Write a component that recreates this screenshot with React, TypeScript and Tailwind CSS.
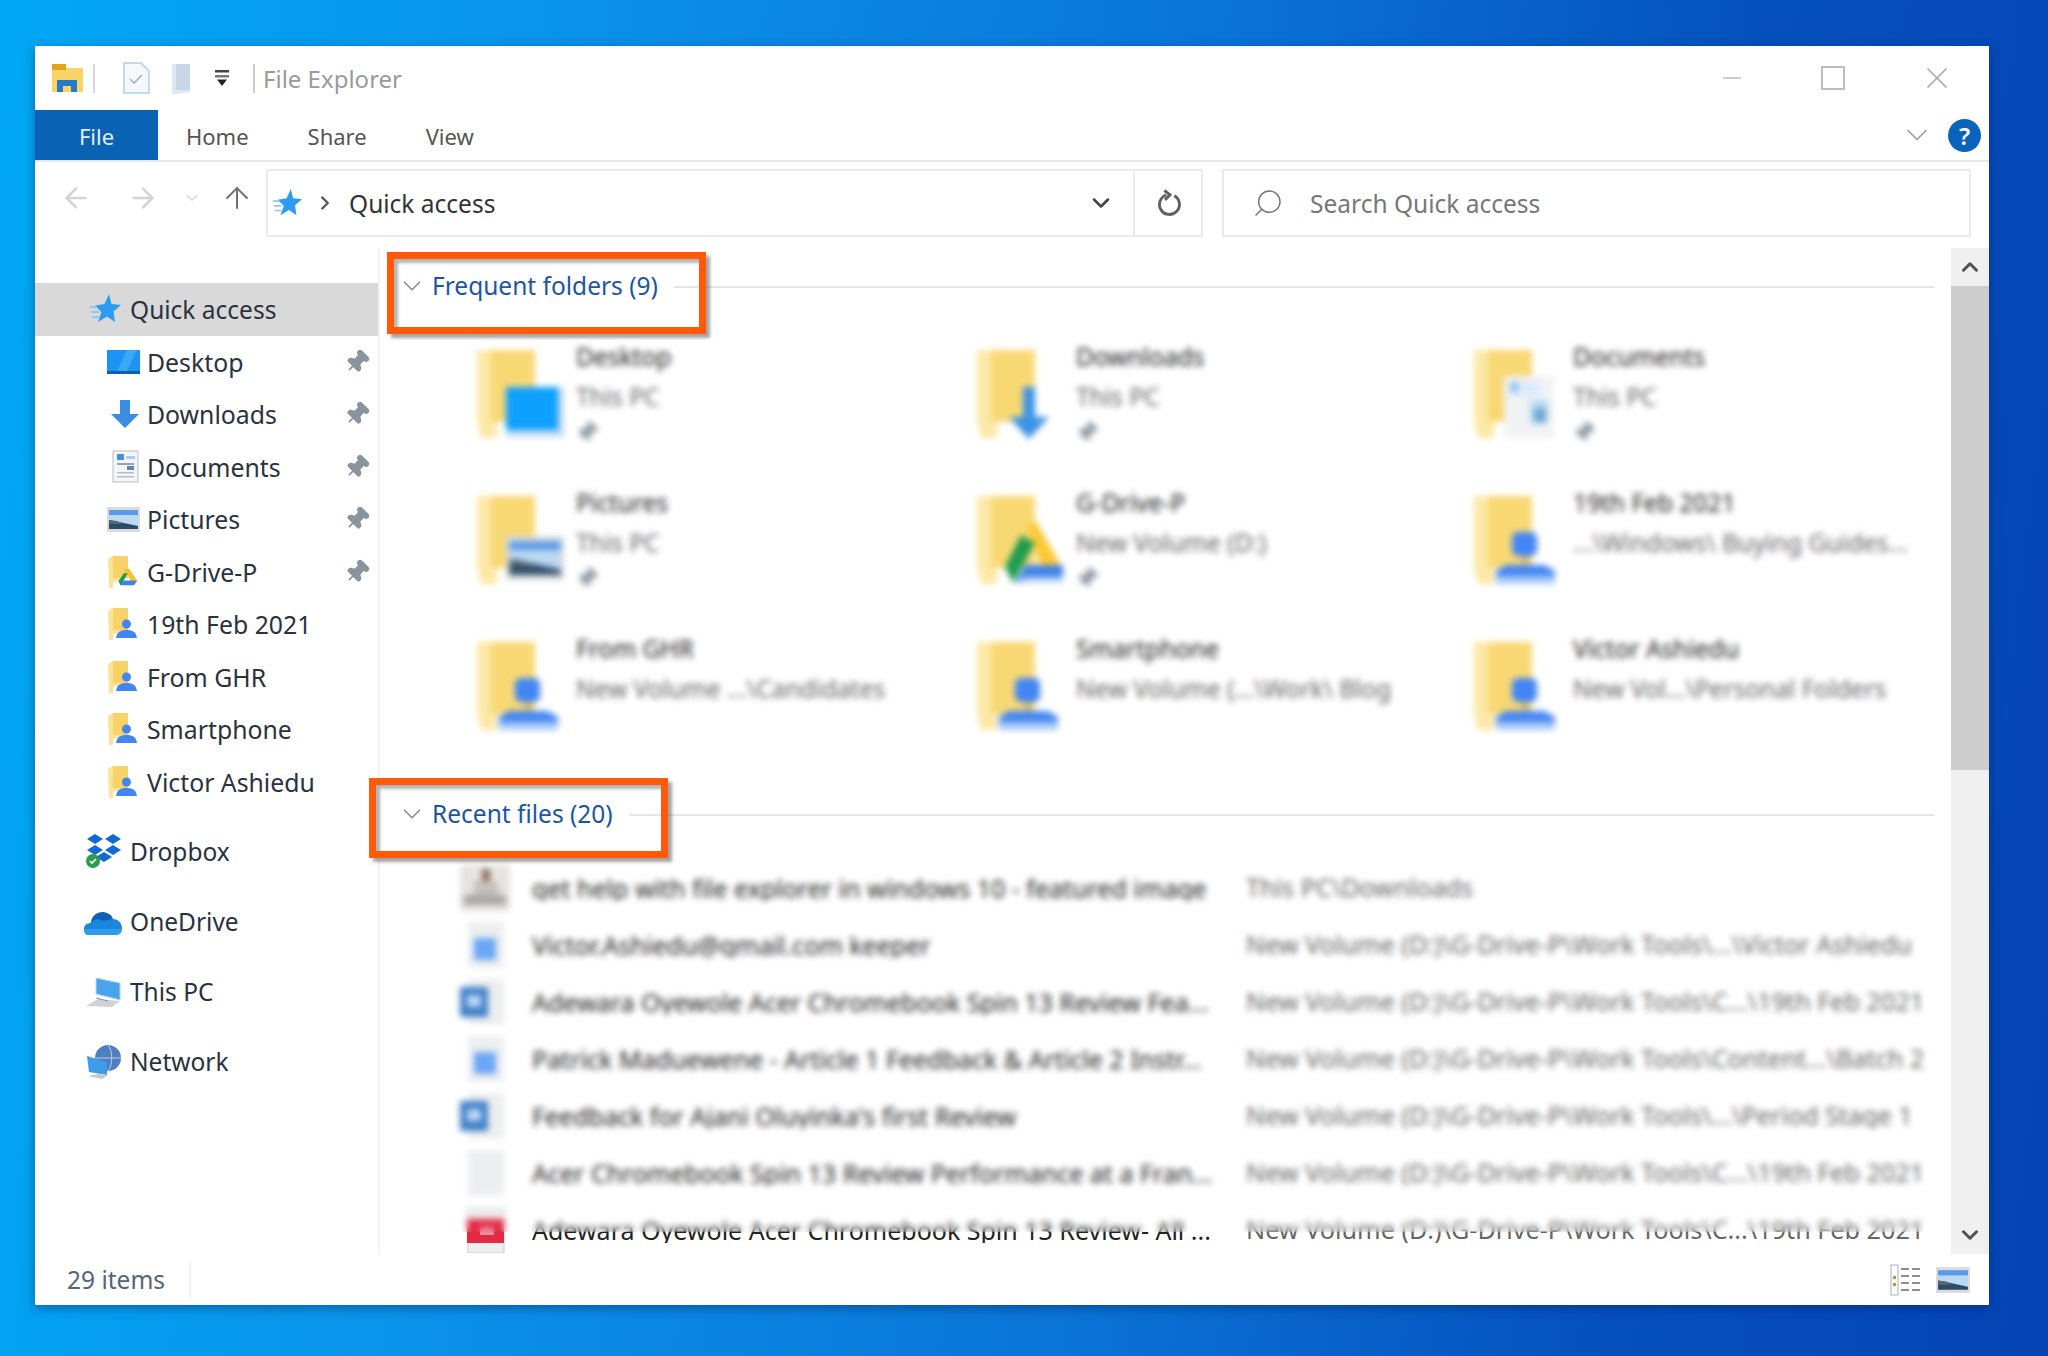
import React from "react";
import { ArrowLeft, ArrowRight, ArrowUp, ChevronDown, ChevronUp, ChevronRight, Search, Pin, X, Minus } from "lucide-react";

const Star = ({ s = 32 }: { s?: number }) => (
  <svg width={s} height={s} viewBox="0 0 32 32" className="shrink-0">
    <polygon points="19,1 21.5,11 31,12 23.5,18.5 25,29 17,23.5 8,29 11.5,19 5,12.5 14.5,11" fill="#2c9cf2" />
    <path d="M0 14h7M1 19h8M2 24h7" stroke="#8cc8f6" strokeWidth="1.8" />
  </svg>
);

const DesktopI = () => (
  <svg width="33" height="24" viewBox="0 0 33 24"><rect width="33" height="24" fill="#1d93f3" /><rect y="21" width="33" height="3" fill="#0f5fb0" /><path d="M20 0L10 21h10L30 0z" fill="#3aa7f7" /></svg>
);
const DownloadI = () => (
  <svg width="30" height="30" viewBox="0 0 30 30"><path d="M10 1h10v14h9L15 29 1 15h9z" fill="#3c8ddf" /></svg>
);
const DocI = () => (
  <svg width="28" height="33" viewBox="0 0 28 33"><rect x="1" y="1" width="25" height="31" fill="#f4f5f7" stroke="#b9bdc2" /><rect x="5" y="4" width="7" height="6" fill="#4a90d9" /><rect x="14" y="6" width="9" height="3" fill="#a9cdf0" /><rect x="5" y="13" width="17" height="2" fill="#8fa3b8" /><rect x="15" y="16" width="7" height="4" fill="#5a88b8" /><rect x="5" y="22" width="17" height="1.5" fill="#b9bdc2" /><rect x="5" y="26" width="17" height="1.5" fill="#b9bdc2" /></svg>
);
const PicI = ({ w = 33, h = 25 }: { w?: number; h?: number }) => (
  <svg width={w} height={h} viewBox="0 0 33 25"><rect width="33" height="25" fill="#d9dbde" /><rect x="2" y="3" width="29" height="19" fill="#bcd9f3" /><rect x="2" y="3" width="29" height="5" fill="#5a9ae6" /><path d="M2 13l10 2 19 4v3H2z" fill="#2d4a68" /><path d="M2 13l8 1 6 3H2z" fill="#55686f" /></svg>
);

const PersonS = () => (
  <svg width="21" height="20" viewBox="0 0 21 20" className="absolute left-[8px] top-[11px]"><circle cx="10.5" cy="5" r="4.5" fill="#4285f4" /><path d="M0 19c1-6 4-8 10.5-8S20 13 21 19z" fill="#4285f4" /></svg>
);
const GDriveS = () => (
  <svg width="22" height="21" viewBox="0 0 28 24" className="absolute left-[8px] top-[10px]"><path d="M10 2h7l10 16h-8z" fill="#fbc02d" /><path d="M10 8L3 18l3 5 9-15z" fill="#1e9c4d" /><path d="M9 17h18l-4 6H5z" fill="#3f80ea" /></svg>
);
const FolderS = ({ kind }: { kind: "person" | "drive" }) => (
  <span className="relative mr-[2px] block h-[32px] w-[30px]">
    <svg width="20" height="32" viewBox="0 0 20 32" className="absolute left-0 top-0"><path d="M0 3l5-3h15v22L5 26v6H1z" fill="#fbe39a" /><path d="M5 0h15v22H5z" fill="#f6d267" /></svg>
    {kind === "person" ? <PersonS /> : <GDriveS />}
  </span>
);

const Dropbox = () => (
  <svg width="36" height="36" viewBox="0 0 36 36"><g fill="#1269d3"><path d="M9 0l8 5-8 5-8-5z" /><path d="M27 0l8 5-8 5-8-5z" /><path d="M9 11l8 5-8 5-8-5z" /><path d="M27 11l8 5-8 5-8-5z" /><path d="M18 18l8 5-8 5-8-5z" /></g><circle cx="7" cy="27" r="7" fill="#2a9d50" /><path d="M4 27l2 2 4-4" stroke="#fff" strokeWidth="1.6" fill="none" /></svg>
);
const OneDrive = () => (
  <svg width="38" height="26" viewBox="0 0 38 26"><path d="M7 14c0-8 9-13 16-10 3 1 5 3 6 6l-12 8z" fill="#0f5fb5" /><path d="M29 10c5 0 9 4 9 9 0 4-3 7-7 7H5c-3 0-5-2-5-6 0-4 3-6 7-6 3-4 8-5 12-2z" fill="#1c86dc" /><path d="M0 20h38c0 4-3 6-7 6H5c-3 0-5-2-5-6z" fill="#2f9cec" /></svg>
);
const ThisPc = () => (
  <svg width="38" height="32" viewBox="0 0 38 32"><path d="M12 2l24 5v17l-24-6z" fill="#4aa3ec" stroke="#b8d8f2" /><path d="M2 30l12-7 22 2-8 6z" fill="#cfd3d8" /><path d="M12 22l12 3" stroke="#8a949e" /></svg>
);
const Network = () => (
  <svg width="36" height="34" viewBox="0 0 36 34"><circle cx="22" cy="13" r="13" fill="#4f7fc0" /><path d="M22 0c5 6 5 20 0 26M9 13h26" stroke="#b8cfe8" fill="none" /><path d="M1 11l20 6v13L3 27z" fill="#3d9be8" /><path d="M2 31l10-2 10 1-6 4z" fill="#c4c8cd" /></svg>
);
const Refresh = () => (
  <svg width="30" height="30" viewBox="0 0 24 24" fill="none" stroke="#606060" strokeWidth="2.3"><path d="M15.5 6.2A8 8 0 1 1 9 5.6" /><path d="M7.5 2L12 5.5 8 9.5" /></svg>
);

const PinI = () => <Pin size={26} className="rotate-45 text-[#8a949e]" fill="#8a949e" strokeWidth={1.5} />;

const BigFolder = ({ children }: { children: React.ReactNode }) => (
  <span className="relative block h-[88px] w-[99px] shrink-0">
    <svg width="58" height="88" viewBox="0 0 58 88" className="absolute left-0 top-0"><path d="M0 0h58v62H20v26H4L0 70z" fill="#fce8a6" /><path d="M14 0h44v72H14z" fill="#f8d873" /></svg>
    {children}
  </span>
);

const OvDesktop = () => <span className="absolute left-[29px] top-[37px] block h-[50px] w-[58px] border-b-[7px] border-r-[6px] border-[#c2dcf5] bg-[#0ea0ff]" />;
const OvDownload = () => <svg width="44" height="52" viewBox="0 0 44 52" className="absolute left-[30px] top-[37px]"><path d="M16 0h12v30h14L22 52 2 30h14z" fill="#3b92e4" /></svg>;
const OvDoc = () => <svg width="54" height="62" viewBox="0 0 54 62" className="absolute left-[30px] top-[26px]"><rect width="50" height="62" fill="#f1f2f4" /><rect x="6" y="6" width="30" height="14" fill="#dbeafa" /><rect x="6" y="6" width="8" height="10" fill="#8fc0f0" /><rect x="26" y="24" width="18" height="24" fill="#b7dcf6" /><rect x="30" y="32" width="12" height="14" fill="#6fa9cf" /></svg>;
const OvPic = () => <span className="absolute left-[29px] top-[37px]"><PicI w={58} h={50} /></span>;
const OvDrive = () => <svg width="58" height="60" viewBox="0 0 58 60" className="absolute left-[28px] top-[27px]"><path d="M22 0h10l26 46H36z" fill="#fcc934" /><path d="M16 12L0 44l8 16 22-40z" fill="#1e9c4d" /><path d="M20 42h38v18H10z" fill="#3f80ea" /><path d="M20 54h38v6H10z" fill="#bcd9f8" /></svg>;
const OvPerson = () => <svg width="60" height="52" viewBox="0 0 60 52" className="absolute left-[22px] top-[36px]"><rect x="16" y="0" width="25" height="24" fill="#4285f4" rx="6" /><rect x="26" y="24" width="6" height="8" fill="#c7b27a" /><path d="M0 52V39l10-6h38l11 6v13z" fill="#4285f4" /><rect x="0" y="44" width="59" height="8" fill="#a9c9f8" /></svg>;

const folders: [string, string, boolean, React.ReactNode][] = [
  ["Desktop", "This PC", true, <OvDesktop />],
  ["Downloads", "This PC", true, <OvDownload />],
  ["Documents", "This PC", true, <OvDoc />],
  ["Pictures", "This PC", true, <OvPic />],
  ["G-Drive-P", "New Volume (D:)", true, <OvDrive />],
  ["19th Feb 2021", "...\\Windows\\ Buying Guides...", false, <OvPerson />],
  ["From GHR", "New Volume ...\\Candidates", false, <OvPerson />],
  ["Smartphone", "New Volume (...\\Work\\ Blog", false, <OvPerson />],
  ["Victor Ashiedu", "New Vol...\\Personal Folders", false, <OvPerson />],
];

const PageI = ({ color, badge }: { color?: string; badge?: string }) => (
  <svg width="50" height="46" viewBox="0 0 50 46">
    <rect x="8" y="0" width="36" height="46" fill="#eceef0" />
    {color && <rect x="14" y="16" width="22" height="22" fill={color} />}
    {badge && <rect x="0" y="8" width="28" height="30" fill={badge} />}
    {badge && <rect x="7" y="16" width="14" height="12" fill="#bcd6f2" />}
  </svg>
);
const PdfI = () => (
  <svg width="50" height="46" viewBox="0 0 50 46"><rect x="8" y="0" width="36" height="46" fill="#eeeeee" stroke="#c9c9c9" /><rect x="7" y="12" width="37" height="24" fill="#e32a45" /><rect x="20" y="20" width="14" height="8" fill="#f08a9a" /></svg>
);
const ThumbI = () => (
  <svg width="50" height="46" viewBox="0 0 50 46"><rect width="50" height="46" fill="#e6e4e2" /><path d="M22 4h8v18h-8z" fill="#8a6a55" /><path d="M4 30h42v10H4z" fill="#a9a6a4" /><path d="M14 16h24v14H14z" fill="#c7c0ba" /></svg>
);

const files: [string, string, React.ReactNode][] = [
  ["get help with file explorer in windows 10 - featured image", "This PC\\Downloads", <ThumbI />],
  ["Victor.Ashiedu@gmail.com keeper", "New Volume (D:)\\G-Drive-P\\Work Tools\\...\\Victor Ashiedu", <PageI color="#6ba6f5" />],
  ["Adewara Oyewole Acer Chromebook Spin 13 Review Fea...", "New Volume (D:)\\G-Drive-P\\Work Tools\\C...\\19th Feb 2021", <PageI badge="#3f7fc8" />],
  ["Patrick Maduewene - Article 1 Feedback & Article 2 Instr...", "New Volume (D:)\\G-Drive-P\\Work Tools\\Content...\\Batch 2", <PageI color="#6ba6f5" />],
  ["Feedback for Ajani Oluyinka's first Review", "New Volume (D:)\\G-Drive-P\\Work Tools\\...\\Period Stage 1", <PageI badge="#3f7fc8" />],
  ["Acer Chromebook Spin 13 Review Performance at a Fran...", "New Volume (D:)\\G-Drive-P\\Work Tools\\C...\\19th Feb 2021", <PageI />],
  ["Adewara Oyewole Acer Chromebook Spin 13 Review- All ...", "New Volume (D:)\\G-Drive-P\\Work Tools\\C...\\19th Feb 2021", <PdfI />],
];

const NavRow = ({ icon, label, pin }: { icon: React.ReactNode; label: string; pin?: boolean }) => (
  <div className="flex h-[52.5px] items-center pr-[8px]">
    <span className="flex w-[112px] shrink-0 items-center justify-end pr-[7px]">{icon}</span>
    <span className="flex-1 pt-[1px] text-[24.8px] text-[#2a3240]">{label}</span>
    {pin && <PinI />}
  </div>
);
const TopRow = ({ icon, label, active }: { icon: React.ReactNode; label: string; active?: boolean }) => (
  <div className={`flex h-[52.5px] items-center ${active ? "bg-[#d9d9d9]" : ""}`}>
    <span className="flex w-[95px] shrink-0 items-center justify-end pr-[8px]">{icon}</span>
    <span className="pt-[1px] text-[#2a3240]">{label}</span>
  </div>
);

const SectionHead = ({ label }: { label: string }) => (
  <div className="flex h-[40px] items-center pl-[17px]">
    <ChevronDown size={30} strokeWidth={1.1} className="text-[#7c8a9a]" />
    <span className="ml-[5px] whitespace-nowrap pt-[1px] text-[#1d55a5]">{label}</span>
    <span className="ml-[16px] mt-[2px] h-[2px] flex-1 bg-[#e6e6e6]" />
  </div>
);

export default function App() {
  return (
    <div className="h-[1356px] w-[2048px] overflow-hidden bg-[linear-gradient(97deg,#00a8f5_0%,#0a93ea_25%,#0a74d8_55%,#0550bd_80%,#0444b4_100%)] pl-[35px] pt-[46px] blur-[0.6px] [font-family:'Noto_Sans',sans-serif] text-[24.5px] leading-none">
      <div className="flex h-[1259px] w-[1954px] flex-col bg-white shadow-[0_3px_10px_rgba(0,30,80,0.45)]">
        {/* Title bar */}
        <div className="flex h-[64px] shrink-0 items-center pl-[16px]">
          <svg width="33" height="28" viewBox="0 0 33 28"><path d="M1 0h14v4h17v24H1z" fill="#fbd468" /><rect x="1" y="0" width="14" height="6" fill="#e3a21a" /><path d="M6 28V16h20v12h-6v-6h-8v6z" fill="#2a78c8" /></svg>
          <span className="ml-[9px] h-[29px] w-[2px] bg-[#d8d8d8]" />
          <svg width="27" height="32" viewBox="0 0 27 32" className="ml-[28px]"><path d="M1 1h17l8 8v22H1z" fill="#f5f9fd" stroke="#b5cde6" strokeWidth="1.5" /><path d="M7 17l4 4 8-8" stroke="#a8b4be" strokeWidth="1.6" fill="none" /></svg>
          <svg width="22" height="31" viewBox="0 0 22 31" className="ml-[21px]"><path d="M1 1h18v28l-13 2H1z" fill="#dfe8f2" /><path d="M5 1h14v26H5z" fill="#c8d6e6" /></svg>
          <svg width="14" height="16" viewBox="0 0 14 16" className="ml-[22px]"><rect width="14" height="2.5" fill="#444" /><rect y="5" width="14" height="2.5" fill="#777" /><path d="M2 9.5h10L7 16z" fill="#222" /></svg>
          <span className="ml-[24px] h-[29px] w-[2px] bg-[#cfcfcf]" />
          <span className="ml-[8px] pt-[2px] text-[24px] text-[#9a9a9a]">File Explorer</span>
          <span className="flex-1" />
          <Minus size={28} strokeWidth={1.6} className="text-[#cccccc]" />
          <span className="ml-[75px] h-[24px] w-[24px] border-2 border-[#bdbdbd]" />
          <X size={36} strokeWidth={1.1} className="ml-[74px] text-[#a8a8a8]" />
          <span className="w-[34px]" />
        </div>
        {/* Tabs */}
        <div className="flex h-[52px] shrink-0 items-stretch border-b-2 border-[#e7e7e7] text-[22px] text-[#555]">
          <span className="flex h-[50px] w-[123px] items-center justify-center bg-[#0a62b4] pt-[1px] text-[#e4eef8]">File</span>
          <span className="ml-[28px] flex h-[50px] items-center pt-[1px]">Home</span>
          <span className="ml-[59px] flex h-[50px] items-center pt-[1px]">Share</span>
          <span className="ml-[59px] flex h-[50px] items-center pt-[1px]">View</span>
          <span className="flex-1" />
          <span className="mr-[5px] flex h-[50px] items-center"><ChevronDown size={36} strokeWidth={1} className="text-[#9a9a9a]" /></span>
          <span className="mx-[8px] mb-[3px] mt-[9px] flex h-[33px] w-[33px] items-center justify-center rounded-full bg-[#0a64bc] text-[24px] font-semibold text-white">?</span>
        </div>
        {/* Address row */}
        <div className="flex h-[86px] shrink-0 items-start">
          <div className="flex h-[72px] w-[231px] shrink-0 items-center pl-[25px]">
            <ArrowLeft size={32} strokeWidth={2} className="text-[#d4d4d4]" />
            <ArrowRight size={32} strokeWidth={2} className="ml-[35px] text-[#d4d4d4]" />
            <ChevronDown size={18} strokeWidth={2} className="ml-[24px] text-[#d8d8d8]" />
            <ArrowUp size={34} strokeWidth={1.4} className="ml-[19px] text-[#707070]" />
          </div>
          <div className="mt-[7px] flex h-[68px] w-[937px] shrink-0 items-center border-2 border-[#ebebeb] pl-[5px]">
            <Star s={30} />
            <ChevronRight size={22} strokeWidth={2.6} className="ml-[11px] text-[#555]" />
            <span className="ml-[13px] pt-[2px] text-[#333]">Quick access</span>
            <span className="flex-1" />
            <ChevronDown size={28} strokeWidth={2.2} className="text-[#444]" />
            <span className="ml-[18px] h-full w-[2px] bg-[#ebebeb]" />
            <span className="flex w-[66px] justify-center pl-[3px]"><Refresh /></span>
          </div>
          <div className="ml-[19px] mt-[7px] flex h-[68px] w-[749px] shrink-0 items-center border-2 border-[#ebebeb] pl-[28px]">
            <Search size={32} strokeWidth={1.1} className="-scale-x-100 text-[#777]" />
            <span className="ml-[26px] pt-[3px] text-[#777]">Search Quick access</span>
          </div>
        </div>
        {/* Body */}
        <div className="flex min-h-0 flex-1">
          <aside className="w-[345px] shrink-0 border-r-2 border-[#f3f3f3] pt-[35px]">
            <TopRow active icon={<Star s={32} />} label="Quick access" />
            <NavRow icon={<DesktopI />} label="Desktop" pin />
            <NavRow icon={<DownloadI />} label="Downloads" pin />
            <NavRow icon={<DocI />} label="Documents" pin />
            <NavRow icon={<PicI />} label="Pictures" pin />
            <NavRow icon={<FolderS kind="drive" />} label="G-Drive-P" pin />
            <NavRow icon={<FolderS kind="person" />} label="19th Feb 2021" />
            <NavRow icon={<FolderS kind="person" />} label="From GHR" />
            <NavRow icon={<FolderS kind="person" />} label="Smartphone" />
            <NavRow icon={<FolderS kind="person" />} label="Victor Ashiedu" />
            <div className="mt-[17.5px] flex flex-col gap-[17.5px]">
              <TopRow icon={<Dropbox />} label="Dropbox" />
              <TopRow icon={<OneDrive />} label="OneDrive" />
              <TopRow icon={<ThisPc />} label="This PC" />
              <TopRow icon={<Network />} label="Network" />
            </div>
          </aside>
          <main className="relative min-w-0 flex-1">
            <div className="h-full overflow-hidden pr-[16px] pt-[18px]">
              <div className="w-[1554px]">
                <SectionHead label="Frequent folders (9)" />
              </div>
              <div className="relative mt-[44px] grid w-[1554px] grid-cols-[500px_497px_1fr] pl-[97px]">
                {folders.map(([t, s, p, ov]) => (
                  <div key={t} className="flex h-[146px] items-start">
                    <BigFolder>{ov}</BigFolder>
                    <div className="-mt-[13px] min-w-0">
                      <div className="flex h-[40px] items-center whitespace-nowrap text-[#222]">{t}</div>
                      <div className="flex h-[40px] items-center whitespace-nowrap text-[#666]">{s}</div>
                      {p && <div className="mt-[4px]"><Pin size={22} className="rotate-45 text-[#8a949e]" fill="#8a949e" strokeWidth={1.5} /></div>}
                    </div>
                  </div>
                ))}
                <div className="absolute -top-[10px] bottom-[36px] left-[60px] right-0 backdrop-blur-[3px]" />
              </div>
              <div className="mt-[6px] w-[1554px]">
                <SectionHead label="Recent files (20)" />
              </div>
              <div className="relative mt-[25px] w-[1570px] pl-[80px] text-[25px]">
                {files.map(([n, p, ic]) => (
                  <div key={n} className="flex h-[57px] items-center">
                    <span className="w-[72px] shrink-0">{ic}</span>
                    <span className="w-[714px] shrink-0 overflow-hidden whitespace-nowrap pt-[1px] text-[#222]">{n}</span>
                    <span className="overflow-hidden whitespace-nowrap pt-[1px] text-[25.2px] text-[#666]">{p}</span>
                  </div>
                ))}
                <div className="absolute inset-x-0 bottom-[26px] top-0 backdrop-blur-[3px]" />
              </div>
            </div>
            {/* Highlight boxes */}
            <div className="absolute left-[7px] top-[4px] h-[82px] w-[319px] border-[7px] border-[#ff5a0a] shadow-[4px_4px_3px_rgba(90,90,90,0.55),inset_4px_4px_3px_rgba(90,90,90,0.45)]" />
            <div className="absolute left-[-11px] top-[530px] h-[80px] w-[299px] border-[7px] border-[#ff5a0a] shadow-[4px_4px_3px_rgba(90,90,90,0.55),inset_4px_4px_3px_rgba(90,90,90,0.45)]" />
          </main>
          {/* Scrollbar */}
          <div className="flex w-[38px] shrink-0 flex-col items-center bg-[#f0f0f0]">
            <span className="flex h-[38px] items-center"><ChevronUp size={26} strokeWidth={2.8} className="text-[#505050]" /></span>
            <span className="h-[484px] w-full bg-[#cdcdcd]" />
            <span className="flex-1" />
            <span className="flex h-[38px] items-center"><ChevronDown size={26} strokeWidth={2.8} className="text-[#505050]" /></span>
          </div>
        </div>
        {/* Status bar */}
        <div className="flex h-[51px] shrink-0 items-center pl-[32px] text-[#56657a]">
          <span className="pt-[2px]">29 items</span>
          <span className="ml-[24px] h-[38px] w-[2px] bg-[#f0f0f0]" />
          <span className="flex-1" />
          <svg width="32" height="32" viewBox="0 0 32 32"><g fill="none" stroke="#aab0b8"><rect x="1" y="1" width="7" height="30" /></g><g fill="#8a8f96"><rect x="11" y="4" width="8" height="2" /><rect x="22" y="4" width="8" height="2" /><rect x="11" y="11" width="8" height="2" /><rect x="22" y="11" width="8" height="2" /><rect x="11" y="18" width="8" height="2" /><rect x="22" y="18" width="8" height="2" /><rect x="11" y="25" width="8" height="2" /><rect x="22" y="25" width="8" height="2" /></g><rect x="3" y="12" width="3" height="3" fill="#d98a3a" /><rect x="3" y="19" width="3" height="3" fill="#d98a3a" /></svg>
          <span className="ml-[14px] mr-[19px]"><PicI w={34} h={26} /></span>
        </div>
      </div>
    </div>
  );
}
